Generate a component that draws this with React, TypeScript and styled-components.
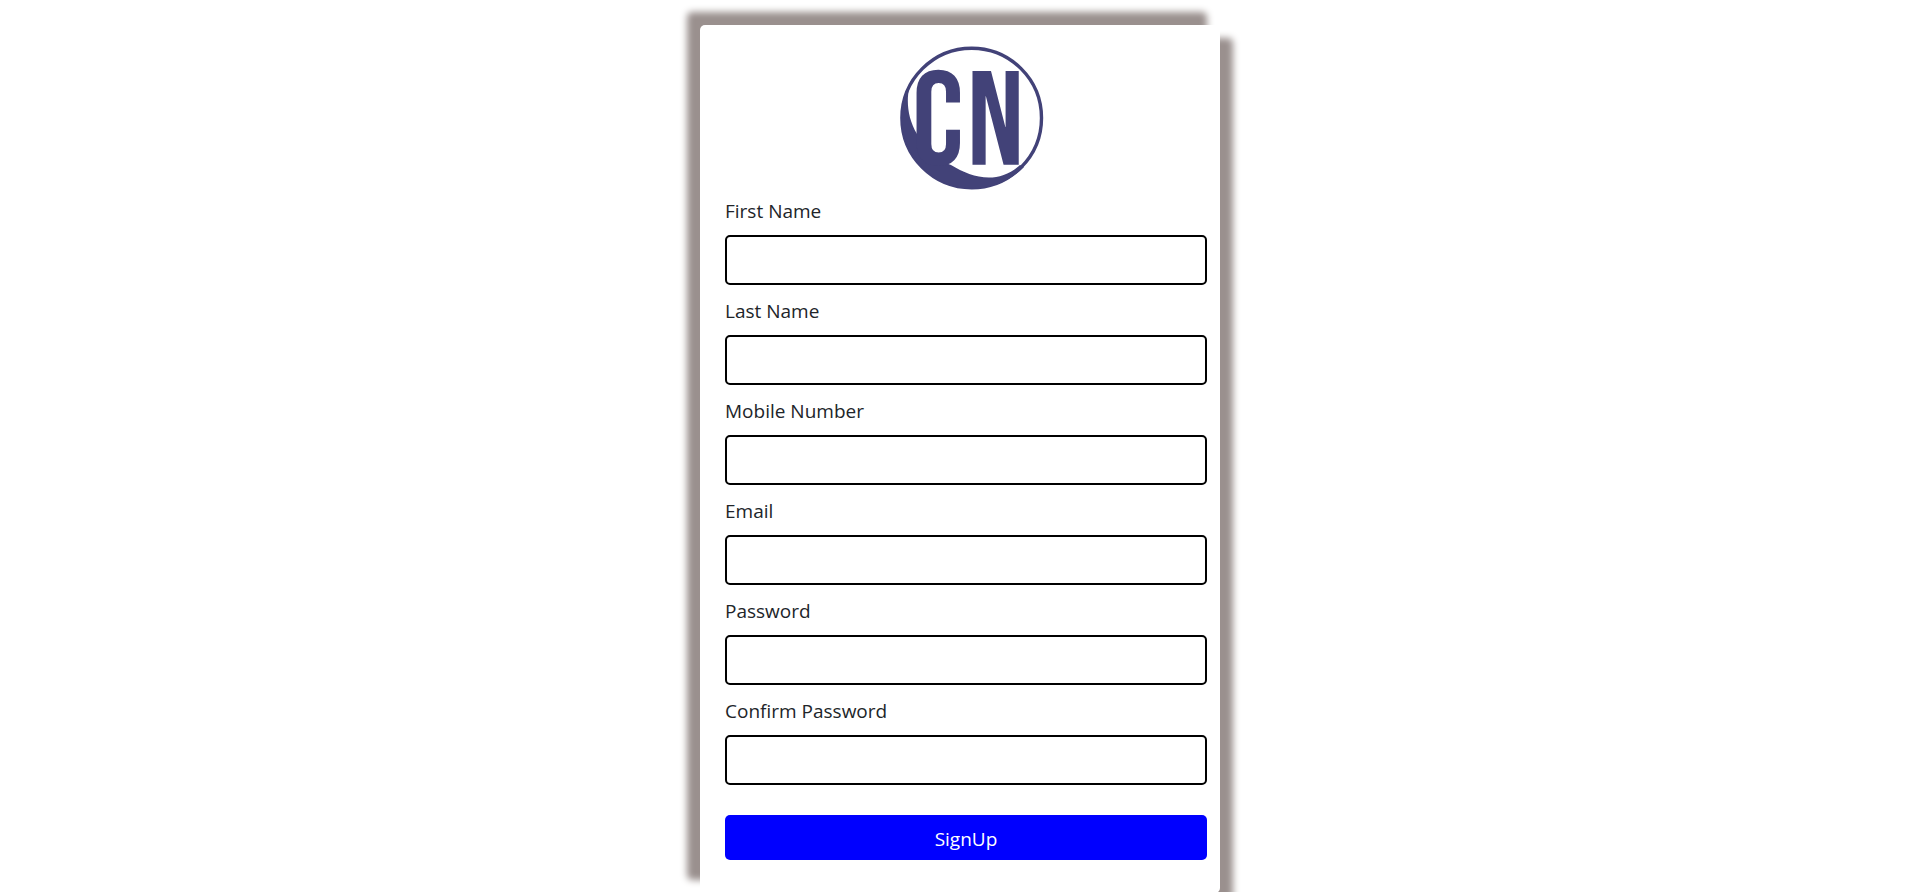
import React, { useId } from 'react';
import styled, { createGlobalStyle } from 'styled-components';

const GlobalStyle = createGlobalStyle`
  *, *::before, *::after {
    box-sizing: border-box;
  }

  body {
    margin: 0;
    background: #ffffff;
    color: #212529;
    font-family: 'Segoe UI', 'Open Sans', 'Noto Sans', sans-serif;
    font-size: 19px;
    line-height: 32px;
  }
`;

const Page = styled.main`
  display: flex;
  justify-content: center;
  padding-top: 25px;
  overflow: hidden;
`;

const Card = styled.form`
  display: flex;
  flex-direction: column;
  gap: 10px;
  width: 100%;
  max-width: 520px;
  padding: 20px 13px 33px 25px;
  border-radius: 5px;
  background: #ffffff;
  box-shadow:
    13px 13px 7px #9a908e,
    -13px -13px 7px #9a908e;
`;

const Header = styled.header`
  display: flex;
  justify-content: center;
  padding-left: 12px;
  margin-bottom: -10px;
`;

const LogoDrawing = styled.svg`
  display: block;
  width: 150px;
  height: 150px;
  overflow: visible;
`;

const LogoText = styled.text`
  font-family: 'Bebas Neue', 'Open Sans Condensed', 'Roboto Condensed', sans-serif;
  font-size: 134px;
  font-weight: 400;
`;

const Field = styled.div`
  display: flex;
  flex-direction: column;
  gap: 8px;
`;

const Label = styled.label`
  align-self: flex-start;
`;

const Input = styled.input`
  width: 100%;
  height: 50px;
  padding: 0 12px;
  border: 2px solid #000000;
  border-radius: 5px;
  background: #ffffff;
  color: inherit;
  font: inherit;
`;

const SubmitButton = styled.button`
  height: 45px;
  margin-top: 20px;
  padding: 2px 0 0;
  border: 0;
  border-radius: 5px;
  background: #0000ff;
  color: #ffffff;
  font: inherit;
  cursor: pointer;
`;

function Logo() {
  return (
    <LogoDrawing viewBox="-3 -1 150 150" fill="#424278" role="img" aria-label="CN">
      <circle cx="71.7" cy="72" r="69.8" fill="none" stroke="#424278" strokeWidth="3.4" />
      <path d="M13 32 C6 45 5 68 17 88 L26 100 L33 112 L51 119 C72 132 98 139 120 119 L124 121 A71.5 71.5 0 0 1 13 32 Z" />
      <LogoText x="12" y="119">C</LogoText>
      <LogoText x="67" y="119">N</LogoText>
    </LogoDrawing>
  );
}

type FormFieldProps = {
  label: string;
  type?: string;
};

function FormField({ label, type = 'text' }: FormFieldProps) {
  const id = useId();
  return (
    <Field>
      <Label htmlFor={id}>{label}</Label>
      <Input id={id} type={type} />
    </Field>
  );
}

export default function App() {
  return (
    <>
      <GlobalStyle />
      <Page>
        <Card onSubmit={(event) => event.preventDefault()}>
          <Header>
            <Logo />
          </Header>
          <FormField label="First Name" />
          <FormField label="Last Name" />
          <FormField label="Mobile Number" type="tel" />
          <FormField label="Email" type="email" />
          <FormField label="Password" type="password" />
          <FormField label="Confirm Password" type="password" />
          <SubmitButton type="submit">SignUp</SubmitButton>
        </Card>
      </Page>
    </>
  );
}
